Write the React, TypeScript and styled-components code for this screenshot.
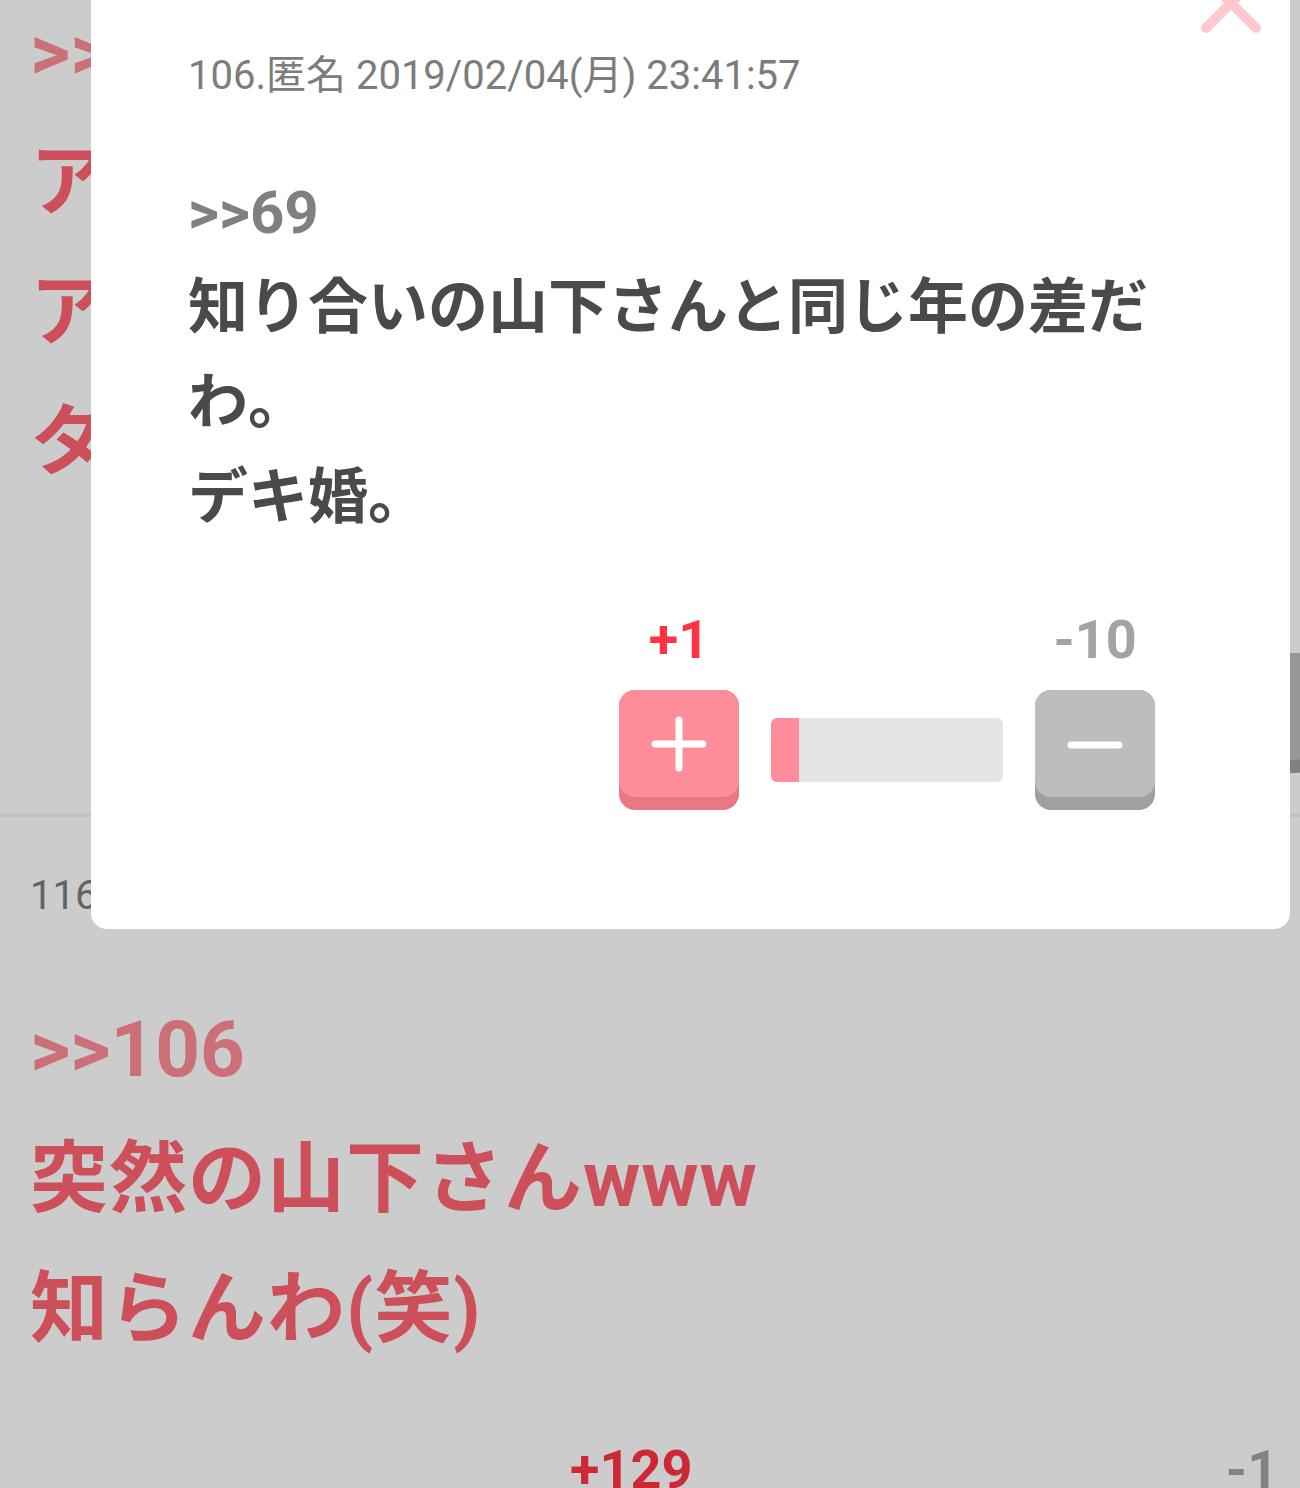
import styled, { createGlobalStyle, css } from 'styled-components'

const GlobalStyle = createGlobalStyle`
  html, body {
    margin: 0;
    padding: 0;
  }
  body {
    width: 1300px;
    height: 1488px;
    overflow: hidden;
    background: #fff;
    font-family: Roboto, "Noto Sans CJK JP", sans-serif;
  }
`

type Post = {
  no: number
  date: string
  quote: string
  lines: string[]
  plus: number
  minus: number
}

const thread: Post[] = [
  {
    no: 105,
    date: '2019/02/04(月) 23:40:12',
    quote: '>>101',
    lines: ['アタシの周りもそうだよ', 'アラフォー同士とか', 'タイミングだよね'],
    plus: 87,
    minus: 3,
  },
  {
    no: 116,
    date: '2019/02/04(月) 23:52:30',
    quote: '>>106',
    lines: ['突然の山下さんwww', '知らんわ(笑)'],
    plus: 129,
    minus: 1,
  },
]

const popup: Post = {
  no: 106,
  date: '2019/02/04(月) 23:41:57',
  quote: '>>69',
  lines: ['知り合いの山下さんと同じ年の差だわ。', 'デキ婚。'],
  plus: 1,
  minus: 10,
}

const tones = {
  plus: { text: '#ff3344', face: '#ff8c99', band: '#e97884' },
  minus: { text: '#a3a3a3', face: '#bdbdbd', band: '#a0a0a0' },
}
type Tone = keyof typeof tones

export default function App() {
  return (
    <Root>
      <GlobalStyle />
      <Page>
        {thread.map((p) => (
          <ThreadPost key={p.no}>
            <Meta>{p.no}.匿名 {p.date}</Meta>
            <Body $popup={false}>
              <Quote $popup={false}>{p.quote}</Quote>
              {p.lines.map((l, i) => (
                <div key={i}>{l}</div>
              ))}
            </Body>
            <Votes plus={p.plus} minus={p.minus} popup={false} />
          </ThreadPost>
        ))}
      </Page>
      <Overlay />
      <Modal>
        <CloseButton aria-label="閉じる">
          <svg width="70" height="70" viewBox="0 0 70 70">
            <path d="M10 10L60 60M60 10L10 60" stroke="#ffc8cd" strokeWidth="10" strokeLinecap="round" />
          </svg>
        </CloseButton>
        <Meta>{popup.no}.匿名 {popup.date}</Meta>
        <Body $popup>
          <Quote $popup>{popup.quote}</Quote>
          {popup.lines.map((l, i) => (
            <div key={i}>{l}</div>
          ))}
        </Body>
        <Votes plus={popup.plus} minus={popup.minus} popup />
      </Modal>
    </Root>
  )
}

const Votes = ({ plus, minus, popup }: { plus: number; minus: number; popup: boolean }) => {
  const ratio = plus / (plus + minus)
  return (
    <VoteGrid $popup={popup}>
      <Count $tone="plus">+{plus}</Count>
      <span />
      <Count $tone="minus">-{minus}</Count>
      <VoteButton $tone="plus" aria-label="プラス">
        <Face $tone="plus">
          <svg width="56" height="56" viewBox="0 0 56 56">
            <path d="M4 28H52M28 4V52" stroke="#fff" strokeWidth="7" strokeLinecap="round" />
          </svg>
        </Face>
      </VoteButton>
      <Bar>
        <Fill style={{ width: `${Math.max(ratio * 100, 12)}%` }} />
      </Bar>
      <VoteButton $tone="minus" aria-label="マイナス">
        <Face $tone="minus">
          <svg width="56" height="56" viewBox="0 0 56 56">
            <path d="M4 29H52" stroke="#fff" strokeWidth="7" strokeLinecap="round" />
          </svg>
        </Face>
      </VoteButton>
    </VoteGrid>
  )
}

const Root = styled.div`
  position: relative;
  width: 1300px;
  height: 1488px;
  overflow: hidden;
`

const Page = styled.main`
  margin-top: -180px;
`

const ThreadPost = styled.article`
  padding: 54px 0 41px 30px;
  border-bottom: 3px solid #f2f2f2;
`

const Meta = styled.div`
  font-size: 40px;
  line-height: 50px;
  color: #7c7c7c;
  white-space: nowrap;
`

const Body = styled.div<{ $popup: boolean }>`
  margin-top: 64px;
  font-weight: 700;
  ${({ $popup }) =>
    $popup
      ? css`
          font-size: 60px;
          line-height: 95px;
          color: #4a4a4a;
        `
      : css`
          font-size: 78px;
          line-height: 130px;
          color: #ff6370;
          white-space: nowrap;
          letter-spacing: 1px;
        `}
`

const Quote = styled.div<{ $popup: boolean }>`
  color: ${({ $popup }) => ($popup ? '#808080' : '#ff8d97')};
  letter-spacing: 0;
`

const VoteGrid = styled.div<{ $popup: boolean }>`
  display: grid;
  grid-template-rows: 60px 120px;
  row-gap: 20px;
  column-gap: 32px;
  margin-top: 65px;
  ${({ $popup }) =>
    $popup
      ? css`
          grid-template-columns: 120px 232px 120px;
          justify-content: end;
          margin-right: 38px;
        `
      : css`
          grid-template-columns: 120px 1fr 120px;
          margin-left: 540px;
          margin-right: -12px;
        `}
`

const Count = styled.div<{ $tone: Tone }>`
  font-family: Roboto, sans-serif;
  font-size: 54px;
  font-weight: 700;
  line-height: 60px;
  text-align: center;
  color: ${({ $tone }) => tones[$tone].text};
`

const VoteButton = styled.button<{ $tone: Tone }>`
  width: 120px;
  height: 120px;
  padding: 0;
  border: none;
  border-radius: 16px;
  background: ${({ $tone }) => tones[$tone].band};
  display: flex;
  align-items: flex-start;
  cursor: pointer;
`

const Face = styled.span<{ $tone: Tone }>`
  width: 100%;
  height: 107px;
  border-radius: 16px;
  background: ${({ $tone }) => tones[$tone].face};
  display: flex;
  align-items: center;
  justify-content: center;
`

const Bar = styled.div`
  align-self: center;
  height: 64px;
  border-radius: 6px;
  background: #e5e5e5;
  overflow: hidden;
`

const Fill = styled.div`
  height: 100%;
  background: #ff8c99;
`

const Overlay = styled.div`
  position: absolute;
  inset: 0;
  background: rgba(0, 0, 0, 0.2);
`

const Modal = styled.section`
  position: absolute;
  top: -60px;
  left: 91px;
  width: 1199px;
  box-sizing: border-box;
  padding: 111px 97px 119px;
  background: #fff;
  border-radius: 16px;
`

const CloseButton = styled.button`
  position: absolute;
  top: 28px;
  left: 1105px;
  padding: 0;
  border: none;
  background: transparent;
  line-height: 0;
`
